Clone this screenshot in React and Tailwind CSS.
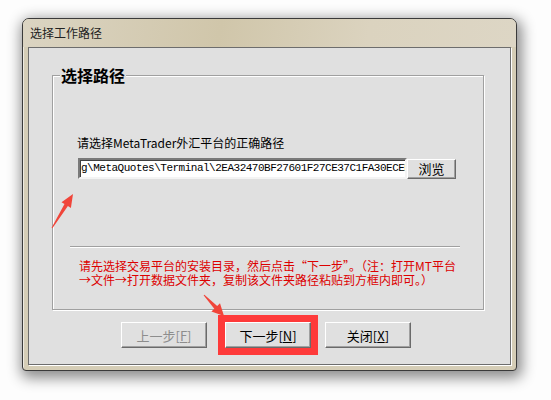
import React from 'react';

const cjk = { fontFamily: '"Noto Sans CJK SC", "Noto Sans", sans-serif' };

const WinButton = ({ children, disabled, className = '' }) => (
  <button
    className={`h-[26px] w-[86px] flex items-center justify-center bg-[#e0e0e0] border border-t-white border-l-white border-r-[#6a6a6a] border-b-[#6a6a6a] shadow-[inset_-1px_-1px_0_#a0a0a0] text-[13px] leading-none ${disabled ? 'text-[#8d8d8d]' : 'text-black'} ${className}`}
    style={cjk}
  >
    {children}
  </button>
);

const Arrows = () => (
  <svg className="absolute inset-0 pointer-events-none" width="551" height="400" viewBox="0 0 551 400">
    {/* arrow at the path input */}
    <polygon
      points="52.4,228.3 67.9,206.1 70.9,207.9 73,194 61.5,202.2 64.5,204 51.6,227.7"
      fill="#f0453a"
    />
    {/* arrow at the next button */}
    <polygon
      points="203.6,295.3 214.3,308.7 211.4,311.4 224,316 220,303.2 217.2,305.9 204.4,294.7"
      fill="#f0453a"
    />
  </svg>
);

export default function App() {
  return (
    <div className="relative w-[551px] h-[400px] bg-[#fdfdfd] pt-[18px] pl-[22px] overflow-hidden" style={cjk}>
      {/* Window */}
      <div className="w-[495px] h-[353px] flex flex-col bg-[#d5cdb6] border border-[#3a3a3a] rounded-t-[7px] rounded-b-[4px] shadow-[2px_4px_14px_3px_rgba(0,0,0,0.45),inset_1px_1px_0_rgba(255,255,255,0.6)]">
        {/* Title bar */}
        <div className="h-[28px] shrink-0 flex items-center pl-[7px] rounded-t-[6px] bg-[linear-gradient(100deg,#dbd4c2_0%,#d0c6aa_40%,#dbd3bf_70%,#ddd6c5_100%)]">
          <span className="text-[12px] text-[#222]">选择工作路径</span>
        </div>

        {/* Client area */}
        <div className="flex-1 mx-[5px] mb-[5px] flex flex-col bg-[#e0e0e0] border border-[#6d6d6d] shadow-[1px_1px_0_#ffffff] pt-[27px]">
          {/* Group box */}
          <div className="relative ml-[23px] w-[432px] h-[235px] border border-[#a0a0a0] shadow-[1px_1px_0_#ffffff,inset_1px_1px_0_#ffffff] flex flex-col">
            <div className="absolute left-[7px] -top-[12px] px-[1px] bg-[#e0e0e0] text-[16px] leading-[22px] font-bold text-black">
              选择路径
            </div>

            <div className="ml-[24px] mt-[59px] text-[12px] leading-[16px] text-black">
              请选择MetaTrader外汇平台的正确路径
            </div>

            <div className="ml-[25px] mt-[7px] flex items-center">
              <div className="w-[329px] h-[21px] bg-white border-2 border-t-[#7a7a7a] border-l-[#7a7a7a] border-b-[#f4f4f4] border-r-[#f4f4f4] shadow-[inset_1px_1px_0_#404040] flex items-center pl-[1px] overflow-hidden">
                <span
                  className="whitespace-nowrap text-[11px] tracking-[-0.5px] text-black"
                  style={{ fontFamily: '"Liberation Mono", monospace' }}
                >
                  g\MetaQuotes\Terminal\2EA32470BF27601F27CE37C1FA30ECEB
                </span>
              </div>
              <button className="w-[49px] h-[20px] flex items-center justify-center bg-[#e0e0e0] border border-t-white border-l-white border-r-[#6a6a6a] border-b-[#6a6a6a] shadow-[inset_-1px_-1px_0_#a0a0a0] text-[13px] leading-none text-black">
                浏览
              </button>
            </div>

            <div className="ml-[17px] mt-[67px] w-[390px] border-t border-t-[#a0a0a0] border-b border-b-white" />

            <div className="ml-[26px] mt-[11px] text-[12px] leading-[14px] text-[#dd0000] whitespace-nowrap">
              请先选择交易平台的安装目录，然后点击“下一步”。（注：打开MT平台
              <br />
              →文件→打开数据文件夹，复制该文件夹路径粘贴到方框内即可。）
            </div>
          </div>

          {/* Buttons */}
          <div className="ml-[92px] mt-[12px] flex">
            <WinButton disabled>
              上一步[<span className="underline">F</span>]
            </WinButton>
            <div className="relative ml-[18px]">
              <WinButton>
                下一步[<span className="underline">N</span>]
              </WinButton>
              <span className="absolute -inset-[7px] border-[7px] border-[#fe3a3a] pointer-events-none" />
            </div>
            <WinButton className="ml-[14px]">
              关闭[<span className="underline">X</span>]
            </WinButton>
          </div>
        </div>
      </div>

      <Arrows />
    </div>
  );
}
